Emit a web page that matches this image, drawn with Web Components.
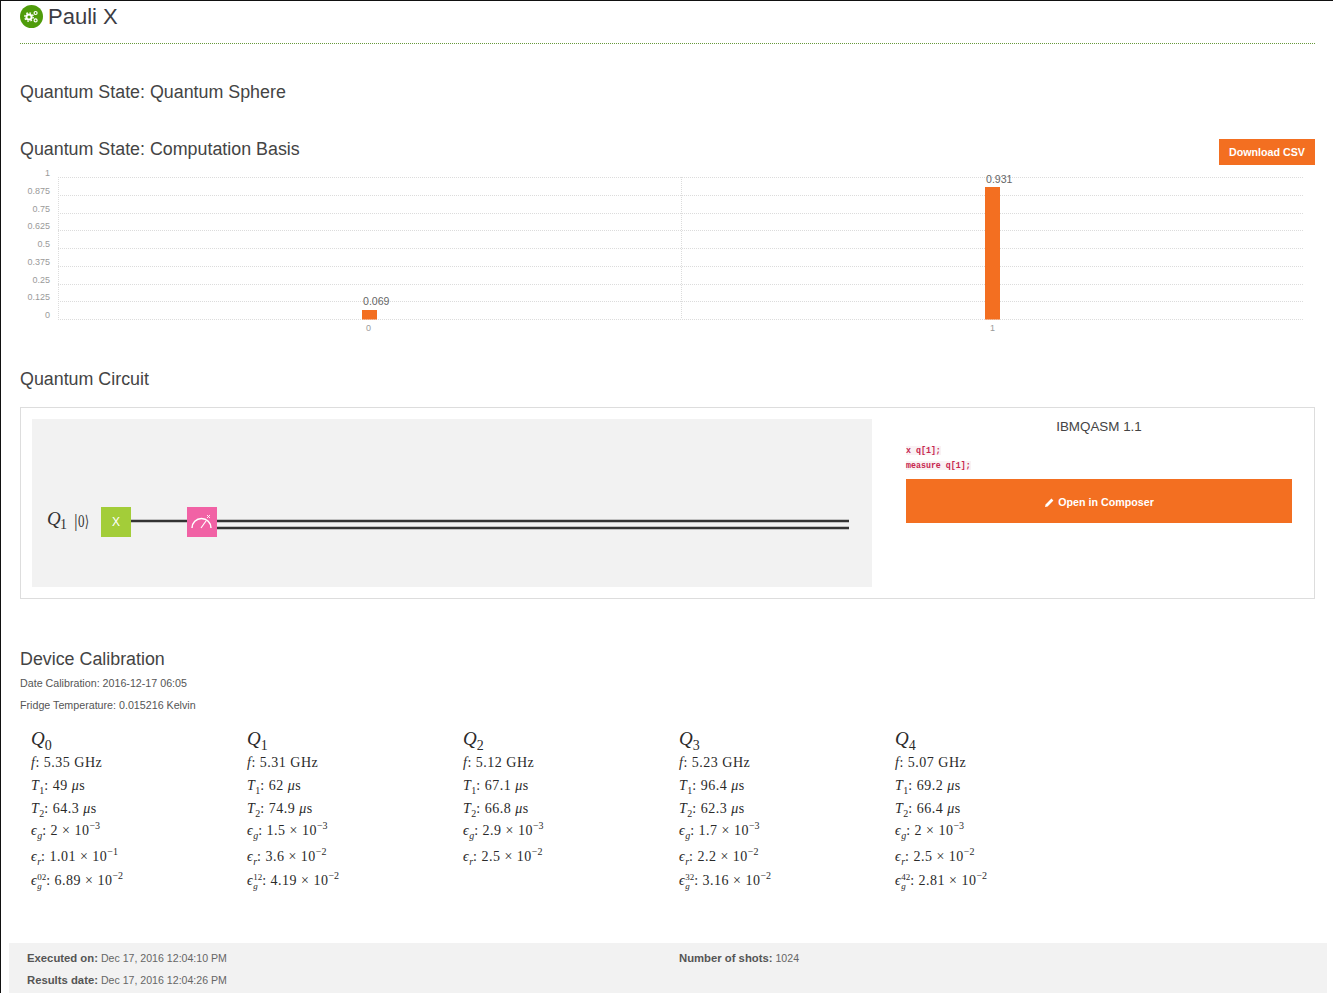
<!DOCTYPE html>
<html>
<head>
<meta charset="utf-8">
<title>Pauli X</title>
<style>
  html, body { margin: 0; padding: 0; background: #fff; }
  body { font-family: "Liberation Sans", Arial, sans-serif; color: #3c3c3c; height: 993px; overflow: hidden; }
</style>
</head>
<body>
<score-page>
  <page-title>Pauli X</page-title>
  <section-heading style="margin-top:38px">Quantum State: Quantum Sphere</section-heading>
  <section-heading style="margin-top:37px"><orange-button slot="action">Download CSV</orange-button>Quantum State: Computation Basis</section-heading>
  <bar-chart></bar-chart>
  <section-heading style="margin-top:34px">Quantum Circuit</section-heading>
  <circuit-card></circuit-card>
  <section-heading style="margin-top:50px">Device Calibration</section-heading>
  <small-line style="margin-top:8px">Date Calibration: 2016-12-17 06:05</small-line>
  <small-line style="margin-top:10px">Fridge Temperature: 0.015216 Kelvin</small-line>
  <calibration-grid></calibration-grid>
  <run-footer></run-footer>
</score-page>

<script>
class ScorePage extends HTMLElement {
    constructor() {
        super();
        this.attachShadow({ mode: 'open' });
        this.shadowRoot.innerHTML = `
            <style>
                :host {
                    display: block;
                    box-sizing: border-box;
                    height: 993px;
                    border-top: 1px solid #111;
                    border-left: 1px solid #111;
                    padding: 0 18px 0 19px;
                    overflow: hidden;
                }
            </style>
            <slot></slot>
        `;
    }
}

class PageTitle extends HTMLElement {
    constructor() {
        super();
        this.attachShadow({ mode: 'open' });
        this.shadowRoot.innerHTML = `
            <style>
                :host {
                    display: flex;
                    align-items: center;
                    gap: 5px;
                    height: 43px;
                    box-sizing: border-box;
                    padding-bottom: 11px;
                    border-bottom: 1px dotted #66993a;
                    font-size: 22px;
                    color: #3c3c44;
                }
                svg { display: block; }
            </style>
            <svg width="23" height="23" viewBox="0 0 23 23">
                <circle cx="11.5" cy="11.5" r="11.5" fill="#4f9c0b"/>
                <circle cx="9" cy="12" r="2.6" fill="none" stroke="#fff" stroke-width="2"/>
                <circle cx="9" cy="12" r="4.2" fill="none" stroke="#fff" stroke-width="1.4" stroke-dasharray="1.6 1.7"/>
                <circle cx="15.6" cy="8" r="1.5" fill="none" stroke="#fff" stroke-width="1.2"/>
                <circle cx="15.6" cy="15.4" r="1.5" fill="none" stroke="#fff" stroke-width="1.2"/>
            </svg>
            <slot></slot>
        `;
    }
}

class SectionHeading extends HTMLElement {
    constructor() {
        super();
        this.attachShadow({ mode: 'open' });
        this.shadowRoot.innerHTML = `
            <style>
                :host {
                    display: flex;
                    justify-content: space-between;
                    align-items: flex-start;
                    font-size: 17.85px;
                    line-height: 20px;
                    color: #444;
                }
            </style>
            <div><slot></slot></div>
            <slot name="action"></slot>
        `;
    }
}

class OrangeButton extends HTMLElement {
    constructor() {
        super();
        this.attachShadow({ mode: 'open' });
        this.shadowRoot.innerHTML = `
            <style>
                :host {
                    display: block;
                    width: 96px;
                    height: 26px;
                    line-height: 26px;
                    text-align: center;
                    background: #f36f21;
                    color: #fff;
                    font-size: 10.7px;
                    font-weight: bold;
                }
            </style>
            <slot></slot>
        `;
    }
}

class BarChart extends HTMLElement {
    constructor() {
        super();
        this.attachShadow({ mode: 'open' });
        const left = 38, right = 1284, top = 9, bottom = 151;
        const ticks = ['1', '0.875', '0.75', '0.625', '0.5', '0.375', '0.25', '0.125', '0'];
        let grid = '';
        ticks.forEach((t, i) => {
            const y = Math.round(top + (bottom - top) * i / 8);
            grid += `<line x1="${left}" x2="${right}" y1="${y}" y2="${y}" class="grid"/>`;
            grid += `<text x="30" y="${y - 1}" text-anchor="end" class="tick">${t}</text>`;
        });
        this.shadowRoot.innerHTML = `
            <style>
                :host { display: block; height: 167px; margin-top: 3px; }
                svg { display: block; }
                text { font-family: "Liberation Sans", Arial, sans-serif; }
                .grid { stroke: #dcdcdc; stroke-width: 1; stroke-dasharray: 1 1; shape-rendering: crispEdges; }
                .tick { font-size: 9px; fill: #9a9a9a; }
                .value { font-size: 10.6px; fill: #666; }
            </style>
            <svg width="1296" height="167" viewBox="0 0 1296 167">
                ${grid}
                <line x1="${left}" x2="${left}" y1="${top}" y2="${bottom}" class="grid"/>
                <line x1="661" x2="661" y1="${top}" y2="${bottom}" class="grid"/>
                <rect x="342" y="142" width="15" height="9.5" fill="#f36f21"/>
                <rect x="965" y="19" width="15" height="132.5" fill="#f36f21"/>
                <text x="343" y="137" class="value">0.069</text>
                <text x="966" y="15" class="value">0.931</text>
                <text x="348.5" y="163" text-anchor="middle" class="tick">0</text>
                <text x="972.5" y="163" text-anchor="middle" class="tick">1</text>
            </svg>
        `;
    }
}

class CircuitCard extends HTMLElement {
    constructor() {
        super();
        this.attachShadow({ mode: 'open' });
        this.shadowRoot.innerHTML = `
            <style>
                :host {
                    display: flex;
                    box-sizing: border-box;
                    height: 192px;
                    margin-top: 18px;
                    padding: 11px;
                    border: 1px solid #ddd;
                    background: #fff;
                }
                .diagram { display: block; flex: none; background: #f2f2f2; }
                .diagram text { fill: #333; }
                .side { margin-left: 34px; width: 386px; }
                h4 {
                    margin: 0;
                    font-size: 13.4px;
                    font-weight: normal;
                    line-height: 16px;
                    text-align: center;
                    color: #444;
                }
                pre {
                    margin: 8px 0 0;
                    font-family: "Liberation Mono", monospace;
                    font-size: 8.3px;
                    font-weight: bold;
                    line-height: 15px;
                    color: #c7254e;
                }
                code { background: #f9f2f4; font-family: inherit; }
                .open {
                    display: flex;
                    align-items: center;
                    justify-content: center;
                    gap: 3px;
                    box-sizing: border-box;
                    height: 44px;
                    margin-top: 6px;
                    padding-top: 2px;
                    background: #f36f21;
                    color: #fff;
                    font-size: 10.7px;
                    font-weight: bold;
                }
            </style>
            <svg class="diagram" width="840" height="168" viewBox="0 0 840 168">
                <text x="15" y="106" font-family="'Liberation Serif', serif" font-style="italic" font-size="19">Q</text>
                <text x="28" y="110" font-family="'Liberation Serif', serif" font-size="14">1</text>
                <text x="42" y="108" font-family="'DejaVu Serif', serif" font-size="16" textLength="15" lengthAdjust="spacingAndGlyphs">|0⟩</text>
                <line x1="99" x2="156" y1="102" y2="102" stroke="#333" stroke-width="2.5"/>
                <line x1="185" x2="817" y1="102" y2="102" stroke="#333" stroke-width="2.5"/>
                <line x1="185" x2="817" y1="109" y2="109" stroke="#333" stroke-width="2.5"/>
                <rect x="69" y="88" width="30" height="30" fill="#a3cd39"/>
                <text x="84" y="107" text-anchor="middle" font-family="'Liberation Sans', sans-serif" font-size="12" style="fill:#fff">X</text>
                <rect x="155" y="88" width="30" height="30" fill="#f162a5"/>
                <path d="M160 109 a9.5 9.5 0 0 1 19 0" fill="none" stroke="#fff" stroke-width="1.5"/>
                <line x1="169" x2="174" y1="109" y2="102" stroke="#fff" stroke-width="1.2"/>
                <path d="M175 96 l3 3 M178 96 l-3 3" stroke="#fff" stroke-width="0.9"/>
            </svg>
            <div class="side">
                <h4>IBMQASM 1.1</h4>
                <pre><code>x q[1];</code>
<code>measure q[1];</code></pre>
                <div class="open">
                    <svg width="11" height="11" viewBox="0 0 11 11">
                        <path d="M1 10 L1.6 7.4 L7.4 1.6 L9.4 3.6 L3.6 9.4 Z" fill="#fff"/>
                    </svg>
                    <span>Open in Composer</span>
                </div>
            </div>
        `;
    }
}

class SmallLine extends HTMLElement {
    constructor() {
        super();
        this.attachShadow({ mode: 'open' });
        this.shadowRoot.innerHTML = `
            <style>
                :host { display: block; font-size: 10.7px; line-height: 12px; color: #555; }
            </style>
            <slot></slot>
        `;
    }
}

const qubits = [
    { n: '0', f: '5.35', t1: '49', t2: '64.3', eg: ['2', '3'], er: ['1.01', '1'], cx: ['02', '6.89', '2'] },
    { n: '1', f: '5.31', t1: '62', t2: '74.9', eg: ['1.5', '3'], er: ['3.6', '2'], cx: ['12', '4.19', '2'] },
    { n: '2', f: '5.12', t1: '67.1', t2: '66.8', eg: ['2.9', '3'], er: ['2.5', '2'] },
    { n: '3', f: '5.23', t1: '96.4', t2: '62.3', eg: ['1.7', '3'], er: ['2.2', '2'], cx: ['32', '3.16', '2'] },
    { n: '4', f: '5.07', t1: '69.2', t2: '66.4', eg: ['2', '3'], er: ['2.5', '2'], cx: ['42', '2.81', '2'] }
];

function sci(v) {
    return `${v[0]} × 10<sup>−${v[1]}</sup>`;
}

class QubitColumn extends HTMLElement {
    set qubit(q) {
        const root = this.shadowRoot || this.attachShadow({ mode: 'open' });
        root.innerHTML = `
            <style>
                :host {
                    display: grid;
                    grid-template-rows: 24px 23px 23px 22px 26px 24px;
                    align-content: start;
                    align-items: start;
                    font-family: "Liberation Serif", serif;
                    font-size: 14px;
                    line-height: 20px;
                    letter-spacing: 0.5px;
                    color: #2a2a2a;
                }
                i { font-style: italic; }
                .name { font-size: 19px; letter-spacing: 0; }
                .name sub { font-size: 14px; }
                sub, sup { font-size: 10px; line-height: 0; letter-spacing: 0; }
                .stack { display: inline-flex; flex-direction: column; vertical-align: middle; font-size: 9px; line-height: 9px; letter-spacing: 0; }
            </style>
            <div class="name"><i>Q</i><sub>${q.n}</sub></div>
            <div><i>f</i>: ${q.f} GHz</div>
            <div><i>T</i><sub>1</sub>: ${q.t1} <i>μ</i>s</div>
            <div><i>T</i><sub>2</sub>: ${q.t2} <i>μ</i>s</div>
            <div><i>ϵ</i><sub><i>g</i></sub>: ${sci(q.eg)}</div>
            <div><i>ϵ</i><sub><i>r</i></sub>: ${sci(q.er)}</div>
            ${q.cx ? `<div><i>ϵ</i><span class="stack"><span>${q.cx[0]}</span><i>g</i></span>: ${sci([q.cx[1], q.cx[2]])}</div>` : ''}
        `;
    }
}

class CalibrationGrid extends HTMLElement {
    constructor() {
        super();
        this.attachShadow({ mode: 'open' });
        this.shadowRoot.innerHTML = `
            <style>
                :host {
                    display: grid;
                    grid-template-columns: repeat(5, 216px);
                    align-items: start;
                    margin-top: 18px;
                    padding-left: 11px;
                    height: 214px;
                }
            </style>
        `;
        qubits.forEach(q => {
            const col = document.createElement('qubit-column');
            col.qubit = q;
            this.shadowRoot.appendChild(col);
        });
    }
}

class RunFooter extends HTMLElement {
    constructor() {
        super();
        this.attachShadow({ mode: 'open' });
        this.shadowRoot.innerHTML = `
            <style>
                :host {
                    display: grid;
                    grid-template-columns: 652px 1fr;
                    grid-auto-rows: 22px;
                    align-items: center;
                    margin: 0 -12px 0 -11px;
                    height: 50px;
                    box-sizing: border-box;
                    padding: 4px 0 0 18px;
                    background: #f2f2f2;
                    font-size: 10.6px;
                    color: #666;
                }
                b { color: #555; font-size: 11.3px; }
            </style>
            <div><b>Executed on:</b> Dec 17, 2016 12:04:10 PM</div>
            <div><b>Number of shots:</b> 1024</div>
            <div><b>Results date:</b> Dec 17, 2016 12:04:26 PM</div>
        `;
    }
}

customElements.define('score-page', ScorePage);
customElements.define('page-title', PageTitle);
customElements.define('section-heading', SectionHeading);
customElements.define('orange-button', OrangeButton);
customElements.define('bar-chart', BarChart);
customElements.define('circuit-card', CircuitCard);
customElements.define('small-line', SmallLine);
customElements.define('qubit-column', QubitColumn);
customElements.define('calibration-grid', CalibrationGrid);
customElements.define('run-footer', RunFooter);
</script>
</body>
</html>
